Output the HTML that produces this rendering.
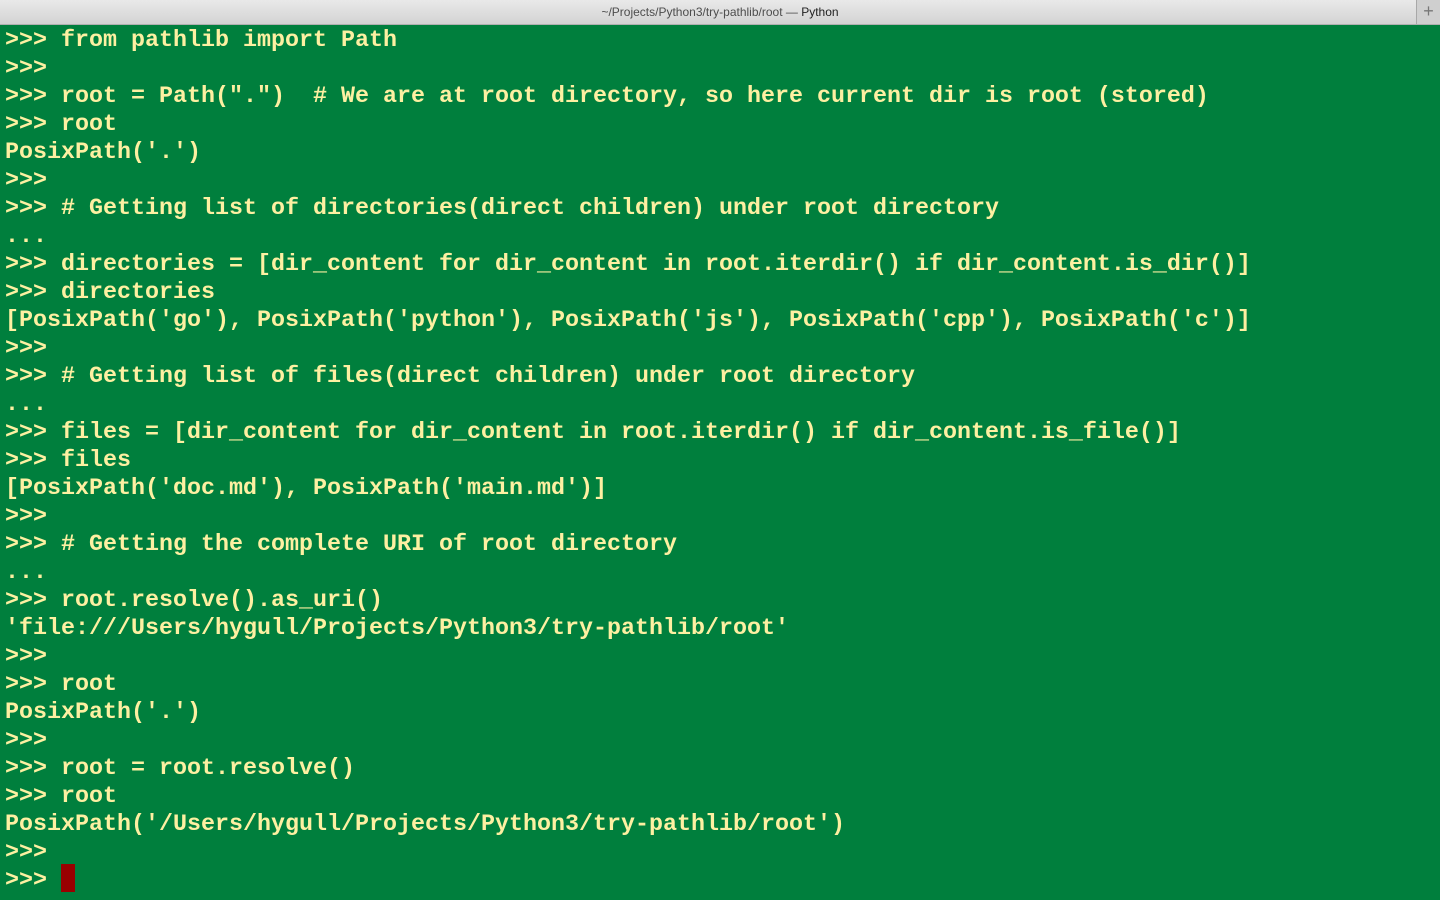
<!DOCTYPE html>
<html><head><style>
body{margin:0;width:1440px;height:900px;overflow:hidden;background:#007f3d;}
#tb{height:25px;background:linear-gradient(#e9e9e9,#d3d3d3);border-bottom:1px solid #b0b0b0;box-sizing:border-box;position:relative;font:12px "Liberation Sans",sans-serif;color:#4d4d4d;text-align:center;line-height:25px;}
#tb b{font-weight:normal;color:#222}
#plus{position:absolute;right:0;top:0;width:23px;height:24px;border-left:1px solid #a8a8a8;background:#cfcfcf;color:#777;font-size:18px;line-height:23px;}
pre{margin:0;padding:2px 0 0 5px;font-family:"Liberation Mono",monospace;font-weight:bold;font-size:23.33px;line-height:28px;color:#fdf0a2;white-space:pre;}
#cur{display:inline-block;width:14px;height:28px;background:#990000;vertical-align:top;position:relative;top:-3px;}
</style></head><body>
<div id="tb">~/Projects/Python3/try-pathlib/root — <b>Python</b><div id="plus">+</div></div>
<pre>&gt;&gt;&gt; from pathlib import Path
&gt;&gt;&gt;
&gt;&gt;&gt; root = Path(".")  # We are at root directory, so here current dir is root (stored)
&gt;&gt;&gt; root
PosixPath('.')
&gt;&gt;&gt;
&gt;&gt;&gt; # Getting list of directories(direct children) under root directory
...
&gt;&gt;&gt; directories = [dir_content for dir_content in root.iterdir() if dir_content.is_dir()]
&gt;&gt;&gt; directories
[PosixPath('go'), PosixPath('python'), PosixPath('js'), PosixPath('cpp'), PosixPath('c')]
&gt;&gt;&gt;
&gt;&gt;&gt; # Getting list of files(direct children) under root directory
...
&gt;&gt;&gt; files = [dir_content for dir_content in root.iterdir() if dir_content.is_file()]
&gt;&gt;&gt; files
[PosixPath('doc.md'), PosixPath('main.md')]
&gt;&gt;&gt;
&gt;&gt;&gt; # Getting the complete URI of root directory
...
&gt;&gt;&gt; root.resolve().as_uri()
'file:///Users/hygull/Projects/Python3/try-pathlib/root'
&gt;&gt;&gt;
&gt;&gt;&gt; root
PosixPath('.')
&gt;&gt;&gt;
&gt;&gt;&gt; root = root.resolve()
&gt;&gt;&gt; root
PosixPath('/Users/hygull/Projects/Python3/try-pathlib/root')
&gt;&gt;&gt;
&gt;&gt;&gt; <span id="cur"></span></pre>
</body></html>
